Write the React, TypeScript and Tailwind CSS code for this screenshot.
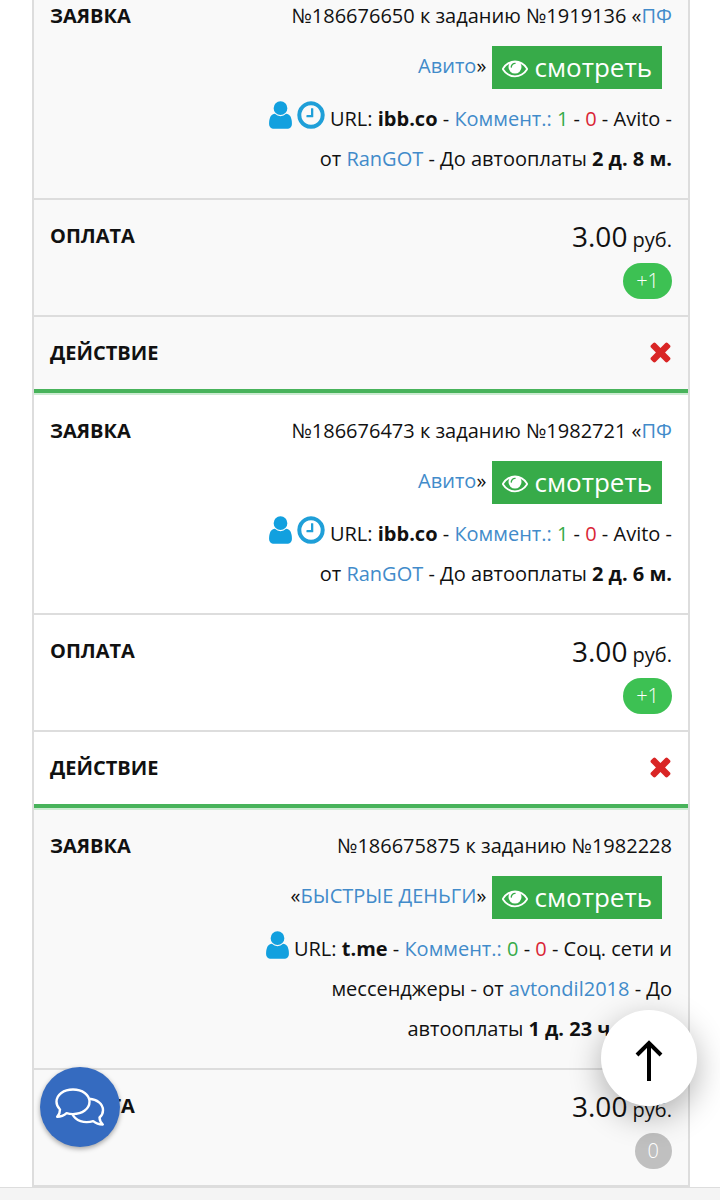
import type { ReactNode } from "react";
import clsx from "clsx";

type Order = {
  id: string;
  task: string;
  title: string;
  delayed: boolean;
  url: string;
  likes: number;
  dislikes: number;
  category: string;
  author: string;
  timeLeft: string;
  price: string;
  bonus: string;
  open?: boolean;
};

const orders: Order[] = [
  {
    id: "186676650",
    task: "1919136",
    title: "ПФ Авито",
    delayed: true,
    url: "ibb.co",
    likes: 1,
    dislikes: 0,
    category: "Avito",
    author: "RanGOT",
    timeLeft: "2 д. 8 м.",
    price: "3.00",
    bonus: "+1",
  },
  {
    id: "186676473",
    task: "1982721",
    title: "ПФ Авито",
    delayed: true,
    url: "ibb.co",
    likes: 1,
    dislikes: 0,
    category: "Avito",
    author: "RanGOT",
    timeLeft: "2 д. 6 м.",
    price: "3.00",
    bonus: "+1",
  },
  {
    id: "186675875",
    task: "1982228",
    title: "БЫСТРЫЕ ДЕНЬГИ",
    delayed: false,
    url: "t.me",
    likes: 0,
    dislikes: 0,
    category: "Соц. сети и мессенджеры",
    author: "avtondil2018",
    timeLeft: "1 д. 23 ч. 18 м.",
    price: "3.00",
    bonus: "0",
    open: true,
  },
];

const UserIcon = () => (
  <svg viewBox="256 0 1280 1792" className="inline-block h-8 w-[23px] align-[-5px]" fill="#12a0df" aria-hidden="true">
    <path d="M1536 1399q0 109-62.5 187t-150.5 78h-854q-88 0-150.5-78t-62.5-187q0-85 8.5-160.5t31.5-152 58.5-131 94-89 134.5-34.5q131 128 313 128t313-128q76 0 134.5 34.5t94 89 58.5 131 31.5 152 8.5 160.5zm-256-887q0 159-112.5 271.5t-271.5 112.5-271.5-112.5-112.5-271.5 112.5-271.5 271.5-112.5 271.5 112.5 112.5 271.5z" />
  </svg>
);

const ClockIcon = () => (
  <svg viewBox="128 0 1536 1792" className="inline-block h-8 w-7 align-[-5px]" fill="#1f9fd8" aria-hidden="true">
    <path d="M1024 544v448q0 14-9 23t-23 9h-320q-14 0-23-9t-9-23v-64q0-14 9-23t23-9h224v-352q0-14 9-23t23-9h64q14 0 23 9t9 23zm416 352q0-148-73-273t-198-198-273-73-273 73-198 198-73 273 73 273 198 198 273 73 273-73 198-198 73-273zm224 0q0 209-103 385.5t-279.5 279.5-385.5 103-385.5-103-279.5-279.5-103-385.5 103-385.5 279.5-279.5 385.5-103 385.5 103 279.5 279.5 103 385.5z" />
  </svg>
);

const EyeIcon = () => (
  <svg viewBox="0 0 1792 1792" className="size-[26px]" fill="currentColor" aria-hidden="true">
    <path d="M1664 960q-152-236-381-353 61 104 61 225 0 185-131.5 316.5t-316.5 131.5-316.5-131.5-131.5-316.5q0-121 61-225-229 117-381 353 133 205 333.5 326.5t434.5 121.5 434.5-121.5 333.5-326.5zm-720-384q0-20-14-34t-34-14q-125 0-214.5 89.5t-89.5 214.5q0 20 14 34t34 14 34-14 14-34q0-86 61-147t147-61q20 0 34-14t14-34zm848 384q0 34-20 69-140 230-376.5 368.5t-499.5 138.5-499.5-139-376.5-368q-20-35-20-69t20-69q140-229 376.5-368t499.5-139 499.5 139 376.5 368q20 35 20 69z" />
  </svg>
);

const CrossIcon = () => (
  <svg viewBox="272 272 1310 1310" className="size-[22px]" fill="#d92525" aria-hidden="true">
    <path d="M1490 1322q0 40-28 68l-136 136q-28 28-68 28t-68-28l-294-294-294 294q-28 28-68 28t-68-28l-136-136q-28-28-28-68t28-68l294-294-294-294q-28-28-28-68t28-68l136-136q28-28 68-28t68 28l294 294 294-294q28-28 68-28t68 28l136 136q28 28 28 68t-28 68l-294 294 294 294q28 28 28 68z" />
  </svg>
);

const TextLink = ({ children }: { children: ReactNode }) => (
  <a href="#" className="text-[#428bca]">
    {children}
  </a>
);

type RowProps = { label: string; last?: boolean; children: ReactNode };

const Row = ({ label, last, children }: RowProps) => (
  <tr>
    <th scope="row" className={clsx("px-4 pt-4 text-left align-top font-bold", !last && "border-b-2 border-[#ddd]")}>
      {label}
    </th>
    <td className={clsx("w-2/3 pt-4 pr-4 text-right align-top", !last && "border-b-2 border-[#ddd]")}>{children}</td>
  </tr>
);

const OrderRows = ({ order }: { order: Order }) => (
  <tbody className="odd:bg-[#f9f9f9] even:bg-white">
    <Row label="ЗАЯВКА">
      <p>
        №{order.id} к заданию №{order.task} «<TextLink>{order.title}</TextLink>»{" "}
        <button
          type="button"
          className="my-2.5 mr-2.5 inline-flex items-center gap-[7px] bg-[#37ab49] px-2.5 py-1 align-middle text-[26px] leading-[35px] text-white"
        >
          <EyeIcon />
          смотреть
        </button>
      </p>
      <p className="pb-[19px]">
        <UserIcon /> {order.delayed && <><ClockIcon /> </>}
        URL: <b>{order.url}</b> - <TextLink>Коммент.:</TextLink> <span className="text-[#37ab49]">{order.likes}</span> -{" "}
        <span className="text-[#d92535]">{order.dislikes}</span> - {order.category} - от <TextLink>{order.author}</TextLink> - До
        автооплаты <b>{order.timeLeft}</b>
      </p>
    </Row>
    <Row label="ОПЛАТА">
      <p>
        <span className="text-[28px]">{order.price}</span> руб.
      </p>
      <p className="flex justify-end pt-[3px] pb-4">
        <span
          className={clsx(
            "rounded-full px-[13px] leading-9 font-light text-white",
            order.open ? "bg-[#c0c0c0]" : "bg-[#3dc153]",
          )}
        >
          {order.bonus}
        </span>
      </p>
    </Row>
    {!order.open && (
      <>
        <Row label="ДЕЙСТВИЕ" last>
          <div className="flex h-14 justify-end pt-2">
            <button type="button" aria-label="Отклонить" className="size-[22px]">
              <CrossIcon />
            </button>
          </div>
        </Row>
        <tr>
          <td colSpan={2} className="h-1.5 border-t-4 border-b-2 border-t-[#48b35b] border-b-[#ccebd1]" />
        </tr>
      </>
    )}
  </tbody>
);

const ChatButton = () => (
  <button
    type="button"
    aria-label="Чат"
    className="fixed bottom-[53px] left-10 flex size-20 items-center justify-center rounded-full bg-[#356bc0] text-white shadow-[0_2px_5px_rgba(0,0,0,0.35)]"
  >
    <svg viewBox="0 0 50 40" className="h-10 w-[50px]" fill="none" stroke="currentColor" strokeWidth="2.4" strokeLinejoin="round" aria-hidden="true">
      <path d="M18 2.500c9.300 0 16.500 5.300 16.500 12.300s-7.200 12.300-16.500 12.300c-2.300 0-4.500-.3-6.400-.9-2.600 2.300-5.600 3.600-9.400 3.600 1.900-2.300 2.900-4.700 2.800-7.300C2.700 20.300 1.500 17.700 1.500 14.800 1.500 7.800 8.700 2.500 18 2.500z" />
      <path d="M34.200 11.800c8 .6 13.800 5.200 13.800 11.400 0 3-1.300 5.400-3.500 7.300.1 2.700 1.200 4.900 3.300 7-4-.1-7-1.200-9.600-3.400C29 37 20.500 33.500 17.500 27.200" />
    </svg>
  </button>
);

const ScrollTopButton = () => (
  <button
    type="button"
    aria-label="Наверх"
    className="fixed right-[23px] bottom-[94px] flex size-24 items-center justify-center rounded-full bg-white text-black shadow-[0_10px_32px_rgba(0,0,0,0.3)]"
  >
    <svg viewBox="0 -4 28 46" className="h-[46px] w-7" fill="none" stroke="currentColor" strokeWidth="4" aria-hidden="true">
      <path d="M14 42V4M2 16 14 4l12 12" />
    </svg>
  </button>
);

export default function App() {
  return (
    <div className="min-h-screen overflow-hidden bg-[#f4f4f4] font-['Open_Sans',sans-serif] text-xl leading-10 text-[#111]">
      <main className="-mt-5 border-b border-[#ddd] bg-white pr-[30px] pl-8">
        <table className="w-full border-separate border-spacing-0 border-x-2 border-[#ddd]">
          {orders.map((order) => (
            <OrderRows key={order.id} order={order} />
          ))}
        </table>
      </main>
      <ChatButton />
      <ScrollTopButton />
    </div>
  );
}
